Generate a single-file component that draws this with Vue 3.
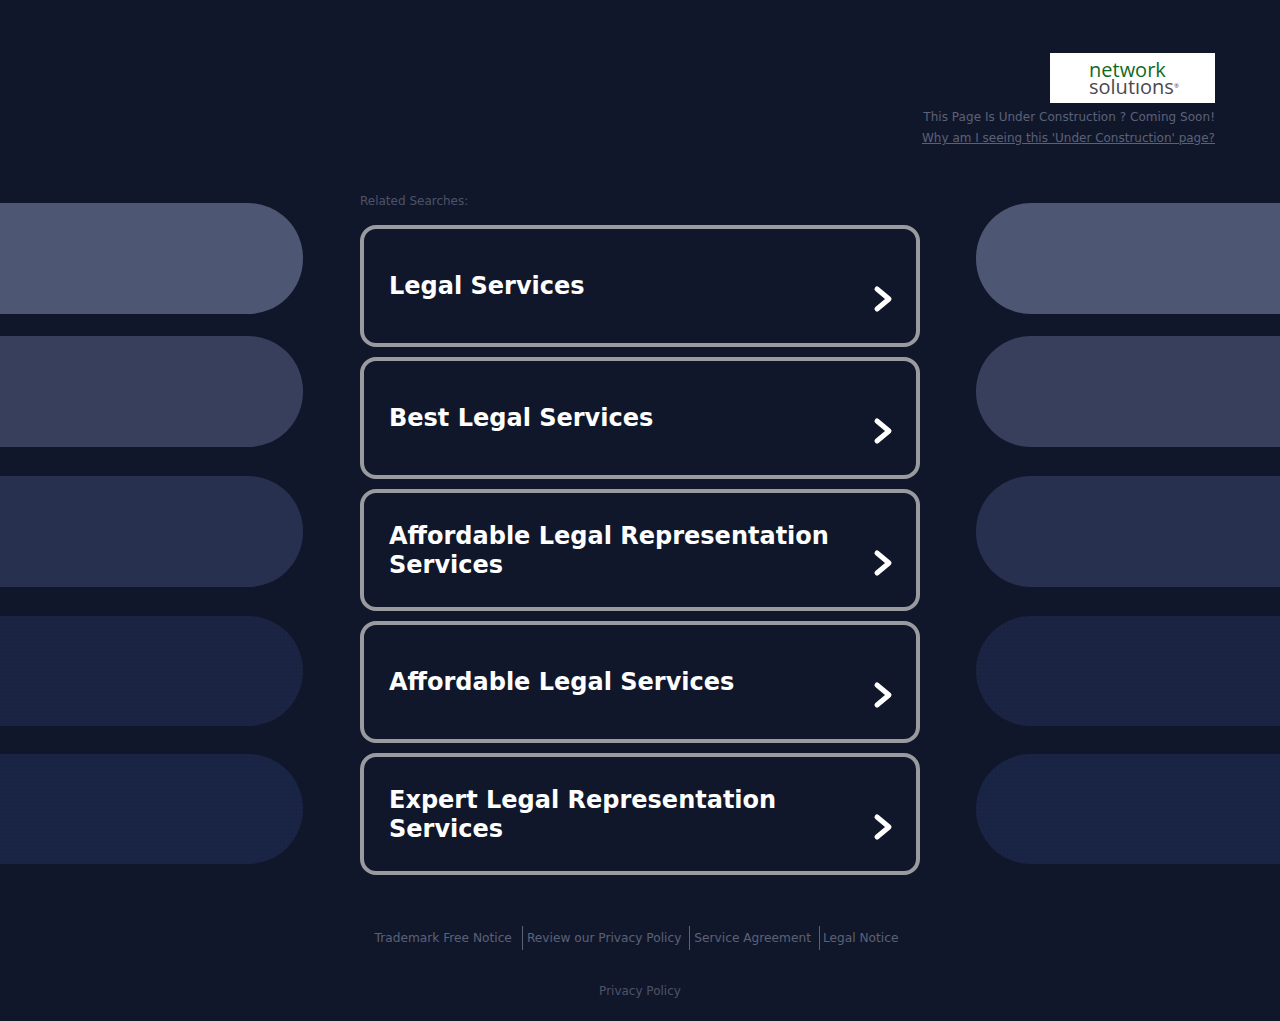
<template>
  <div class="page">
    <header class="top">
      <div class="logo" aria-label="network solutions">
        <span class="logo-a">network</span>
        <span class="logo-b">solutıons<i>®</i></span>
      </div>
      <p class="notice">This Page Is Under Construction ? Coming Soon!</p>
      <a class="why" href="#">Why am I seeing this 'Under Construction' page?</a>
    </header>

    <main class="middle">
      <div class="side side-left">
        <div v-for="n in 5" :key="n" class="pill" :class="'pill-' + n"></div>
      </div>

      <section class="center">
        <p class="related">Related Searches:</p>
        <a v-for="item in searches" :key="item" class="card" href="#">
          <span class="card-title">{{ item }}</span>
          <svg class="chev" width="24" height="30" viewBox="0 0 24 30">
            <path d="M6 5 L18 15 L6 25" fill="none" stroke="#fff" stroke-width="5" stroke-linecap="round" stroke-linejoin="round" />
          </svg>
        </a>
      </section>

      <div class="side side-right">
        <div v-for="n in 5" :key="n" class="pill" :class="'pill-' + n"></div>
      </div>
    </main>

    <footer class="bottom">
      <nav class="links">
        <a v-for="link in links" :key="link" href="#">{{ link }}</a>
      </nav>
      <a class="privacy" href="#">Privacy Policy</a>
    </footer>
  </div>
</template>

<script setup>
const searches = [
  'Legal Services',
  'Best Legal Services',
  'Affordable Legal Representation Services',
  'Affordable Legal Services',
  'Expert Legal Representation Services'
]

const links = [
  'Trademark Free Notice',
  'Review our Privacy Policy',
  'Service Agreement',
  'Legal Notice'
]
</script>

<style>
html, body {
  margin: 0;
  background: #11172b;
}
</style>

<style scoped>
.page {
  height: 1021px;
  overflow: hidden;
  background: #11172b;
  font-family: "DejaVu Sans", sans-serif;
}

a {
  text-decoration: none;
}

.top {
  display: flex;
  flex-direction: column;
  align-items: flex-end;
  padding: 53px 65px 0 0;
  height: 131px;
}

.logo {
  width: 165px;
  height: 50px;
  background: #fff;
  display: flex;
  flex-direction: column;
  padding: 8px 0 0 39px;
  box-sizing: border-box;
  font-family: "Open Sans", sans-serif;
  line-height: 17px;
  font-size: 20px;
}

.logo-a {
  color: #0f6a23;
}

.logo-b {
  color: #4a4a4f;
}

.logo-b i {
  font-size: 6px;
  font-style: normal;
  vertical-align: 6px;
}

.notice {
  margin: 6px 0 0;
  font-size: 12px;
  letter-spacing: 0.04px;
  line-height: 16px;
  color: #5b6178;
}

.why {
  margin-top: 6px;
  font-size: 12px;
  line-height: 15px;
  color: #5b6178;
  text-decoration: underline;
}

.middle {
  display: grid;
  grid-template-columns: 303px 560px 304px;
  column-gap: 57px;
}

.side {
  display: flex;
  flex-direction: column;
  padding-top: 19px;
}

.side-right {
  margin-left: -1px;
  width: 305px;
}

.pill {
  height: 110px;
  flex: none;
}

.side-left .pill {
  border-radius: 0 55px 55px 0;
}

.side-right .pill {
  border-radius: 55px 0 0 55px;
}

.pill-1 { background: #4d5672; height: 111px; }
.pill-2 { background: #373f5d; height: 111px; margin-top: 22px; }
.pill-3 { background: #283050; height: 111px; margin-top: 29px; }
.pill-4 {
  background: #1b2343 radial-gradient(#1d2546 1px, transparent 1px) 0 0 / 4px 4px;
  margin-top: 29px;
}
.pill-5 {
  background: #192343 radial-gradient(#1b2546 1px, transparent 1px) 0 0 / 4px 4px;
  margin-top: 28px;
}

.center {
  min-width: 0;
}

.related {
  margin: 9px 0 0;
  font-size: 12px;
  line-height: 16px;
  color: #4d5368;
}

.card {
  display: flex;
  align-items: center;
  justify-content: space-between;
  height: 122px;
  box-sizing: border-box;
  margin-top: 10px;
  padding: 0 25px;
  border: 4px solid #9a9b9f;
  border-radius: 16px;
  color: #fff;
}

.related + .card {
  margin-top: 16px;
}

.card-title {
  width: 460px;
  font-size: 24px;
  line-height: 29px;
  font-weight: 700;
  padding-top: 1px;
}

.chev {
  flex: none;
  margin: 25px -4px 0 0;
}

.bottom {
  display: flex;
  flex-direction: column;
  align-items: center;
}

.links {
  display: flex;
  justify-content: center;
  margin-top: 51px;
  margin-left: -3px;
}

.links a {
  font-size: 12.2px;
  line-height: 24px;
  color: #5b6178;
  padding: 0 8px 0 4px;
  border-right: 1px solid #5b6178;
}

.links a:first-child {
  padding-right: 10px;
}

.links a:last-child {
  border-right: none;
  padding-left: 3px;
}

.privacy {
  margin-top: 29px;
  font-size: 12px;
  line-height: 24px;
  color: #4d5368;
}
</style>
